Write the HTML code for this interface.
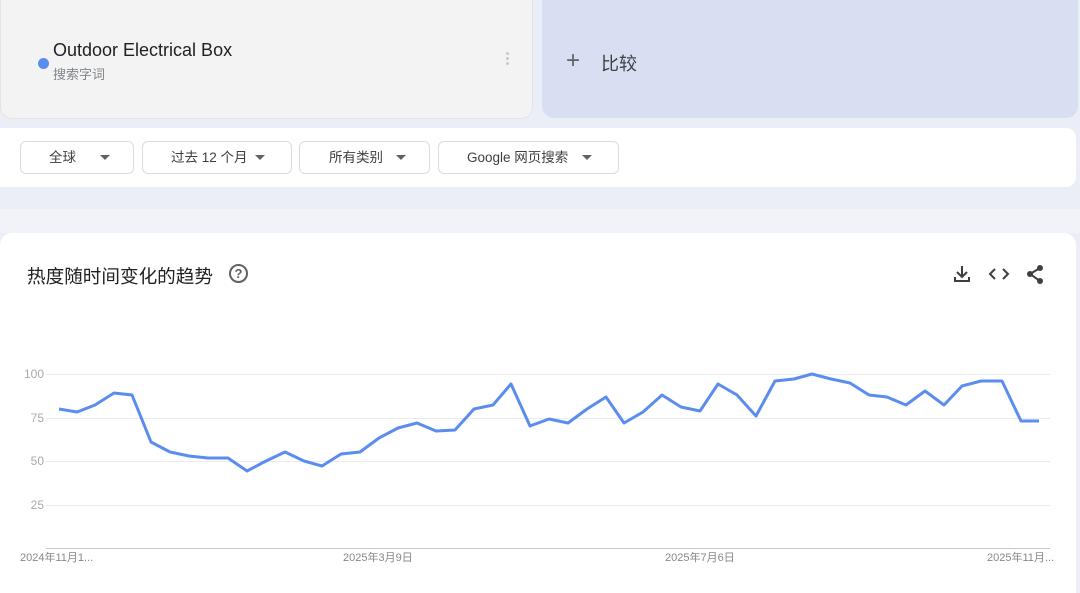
<!DOCTYPE html>
<html><head><meta charset="utf-8"><style>
*{margin:0;padding:0;box-sizing:border-box}
body{width:1080px;height:587px;overflow:hidden;background:#ebeef7;font-family:"Liberation Sans","Noto Sans CJK SC",sans-serif;position:relative}
.abs{position:absolute}
.term{left:0;top:-10px;width:533px;height:129px;background:#f3f3f3;border-radius:12px;border:1px solid #e4e4e4}
.cmp{left:542px;top:-10px;width:536px;height:128px;background:#d9dff2;border-radius:12px}
.filters{left:0;top:128px;width:1076px;height:59px;background:#fff;border-radius:0 10px 10px 0}
.btn{position:absolute;top:13px;height:33px;border:1px solid #dadce0;border-radius:6px;background:#fff;font-size:13.5px;color:#3c4043;line-height:31px}
.btn span{position:absolute}
.tri{position:absolute;top:13px;width:0;height:0;border-left:5px solid transparent;border-right:5px solid transparent;border-top:5px solid #5f6368}
.card{left:0;top:233px;width:1076px;height:360px;background:#fff;border-radius:12px 12px 0 0}
.ylab{position:absolute;font-size:12px;color:#aaa;width:20px;text-align:right;left:24px}
.xlab{position:absolute;font-size:11px;color:#888;top:549px}
</style></head><body>
<div class="abs" style="left:0;top:209px;width:1080px;height:24px;background:#f2f3f8"></div>
<div class="abs term"></div>
<div class="abs" style="left:38px;top:58px;width:11px;height:11px;border-radius:50%;background:#5b8def"></div>
<div class="abs" style="left:53px;top:40px;font-size:18px;color:#202124">Outdoor Electrical Box</div>
<div class="abs" style="left:53px;top:64px;font-size:13px;color:#80868b">搜索字词</div>
<div class="abs" style="left:506px;top:52px;width:3px;height:3px;border-radius:50%;background:#c8c8c8;box-shadow:0 5px 0 #c8c8c8,0 10px 0 #c8c8c8"></div>
<div class="abs cmp"></div>
<div class="abs" style="left:566px;top:47px;font-size:24px;color:#5f6368;font-weight:300">+</div>
<div class="abs" style="left:601px;top:50px;font-size:18px;color:#3c4043">比较</div>
<div class="abs filters">
 <div class="btn" style="left:20px;width:114px"><span style="left:28px">全球</span><i class="tri" style="left:79px"></i></div>
 <div class="btn" style="left:142px;width:150px"><span style="left:28px">过去 12 个月</span><i class="tri" style="left:112px"></i></div>
 <div class="btn" style="left:299px;width:131px"><span style="left:29px">所有类别</span><i class="tri" style="left:96px"></i></div>
 <div class="btn" style="left:438px;width:181px"><span style="left:28px">Google 网页搜索</span><i class="tri" style="left:143px"></i></div>
</div>
<div class="abs card"></div>
<div class="abs" style="left:27px;top:262px;font-size:18.6px;color:#202124">热度随时间变化的趋势</div>
<div class="abs" style="left:229px;top:264px;width:19px;height:19px;border:2px solid #5f6368;border-radius:50%;font-size:13px;font-weight:bold;color:#5f6368;text-align:center;line-height:15px">?</div>
<svg class="abs" style="left:950px;top:262px" width="100" height="24" viewBox="0 0 100 24">
 <g stroke="#3c4043" stroke-width="2" fill="none">
  <path d="M12 4v10M7 10l5 5 5-5M5 15v4h14v-4"/>
  <path d="M45 7l-5 5 5 5M53 7l5 5-5 5"/>
 </g>
 <g fill="#3c4043"><circle cx="90" cy="6" r="3"/><circle cx="80" cy="12" r="3"/><circle cx="90" cy="19" r="3"/></g>
 <path d="M90 6L80 12L90 19" stroke="#3c4043" stroke-width="2" fill="none"/>
</svg>
<svg class="abs" style="left:0;top:0" width="1080" height="587">
 <g stroke="#ebebeb" stroke-width="1">
  <line x1="46" y1="374.5" x2="1050" y2="374.5"/><line x1="46" y1="418.5" x2="1050" y2="418.5"/>
  <line x1="46" y1="461.5" x2="1050" y2="461.5"/><line x1="46" y1="505.5" x2="1050" y2="505.5"/>
 </g>
 <line x1="46" y1="548.5" x2="1050" y2="548.5" stroke="#c8c8c8"/>
 <polyline fill="none" stroke="#5b8def" stroke-width="3" stroke-linejoin="round" points="59,409 77,412 95,405 114,393 132,395 151,442 170,452 189,456 208,458 228,458 247,471 266,461 285,452 304,461 322,466 341,454 360,452 379,438 398,428 417,423 436,431 455,430 474,409 493,405 511,384 530,426 549,419 568,423 587,409 606,397 624,423 643,412 662,395 681,407 700,411 718,384 737,395 756,416 775,381 794,379 812,374 831,379 850,383 869,395 887,397 906,405 925,391 944,405 962,386 981,381 1002,381 1021,421 1039,421"/>
</svg>
<div class="ylab" style="top:367px">100</div>
<div class="ylab" style="top:411px">75</div>
<div class="ylab" style="top:454px">50</div>
<div class="ylab" style="top:498px">25</div>
<div class="xlab" style="left:20px">2024年11月1...</div>
<div class="xlab" style="left:343px">2025年3月9日</div>
<div class="xlab" style="left:665px">2025年7月6日</div>
<div class="xlab" style="left:987px">2025年11月...</div>
</body></html>
